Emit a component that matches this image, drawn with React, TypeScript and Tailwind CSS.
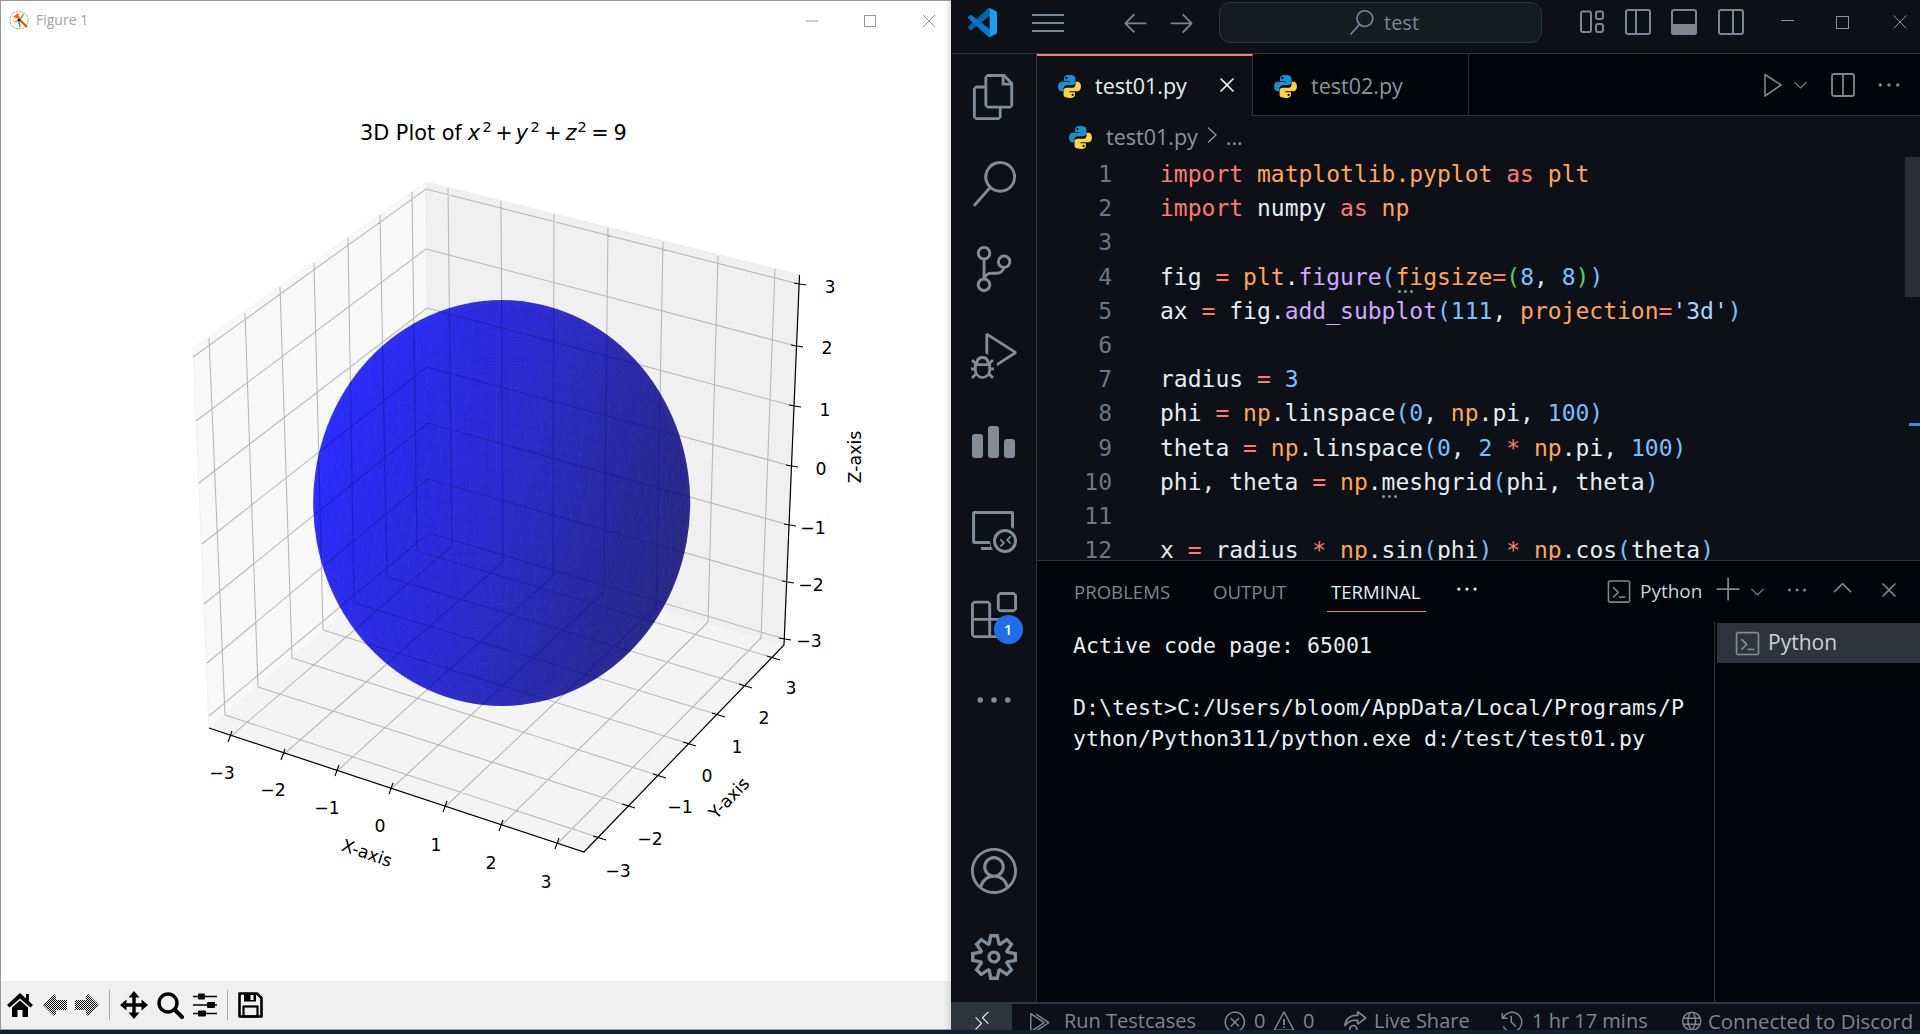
import type { ReactNode } from "react";
import {
  VscAccount,
  VscAdd,
  VscArrowLeft,
  VscArrowRight,
  VscChevronDown,
  VscChevronUp,
  VscClose,
  VscDebugAlt,
  VscEllipsis,
  VscError,
  VscExtensions,
  VscFiles,
  VscGlobe,
  VscHistory,
  VscLiveShare,
  VscMenu,
  VscRemote,
  VscRemoteExplorer,
  VscRunAll,
  VscSearch,
  VscSettingsGear,
  VscSourceControl,
  VscTerminal,
  VscWarning,
} from "react-icons/vsc";

type Pt = [number, number];

// pixel positions read off the matplotlib figure
const zEnds: { l: Pt; b: Pt; r: Pt }[] = [
  { l: [193, 357], b: [426, 189], r: [799, 284] },
  { l: [196, 421], b: [426, 249], r: [796, 346] },
  { l: [199, 483], b: [427, 308], r: [794, 406] },
  { l: [202, 544], b: [427, 367], r: [791, 466] },
  { l: [204, 604], b: [428, 423], r: [789, 525] },
  { l: [207, 663], b: [428, 479], r: [787, 582] },
  { l: [209, 716], b: [429, 533], r: [784, 639] },
];
const leftVerticals: [Pt, Pt][] = [
  [[209, 338], [225, 715]],
  [[245, 313], [258, 687]],
  [[280, 287], [292, 658]],
  [[314, 263], [323, 630]],
  [[348, 238], [354, 603]],
  [[380, 215], [387, 577]],
  [[412, 192], [417, 551]],
];
const backVerticals: [Pt, Pt][] = [
  [[448, 188], [452, 546]],
  [[501, 201], [503, 562]],
  [[554, 214], [553, 576]],
  [[608, 228], [604, 592]],
  [[663, 242], [656, 607]],
  [[718, 256], [708, 622]],
  [[775, 269], [761, 638]],
];
const xTicks: Pt[] = [[230, 737], [283, 755], [337, 771], [391, 789], [445, 807], [501, 826], [557, 844]];
const yTicks: Pt[] = [[600, 838], [629, 806], [660, 776], [690, 744], [719, 715], [746, 686], [774, 658]];
const zTicks: Pt[] = zEnds.map((e) => e.r);

const xLabels: [string, number, number][] = [
  ["−3", 222, 773], ["−2", 273, 790], ["−1", 327, 808], ["0", 380, 826], ["1", 436, 845], ["2", 491, 863], ["3", 546, 882],
];
const yLabels: [string, number, number][] = [
  ["−3", 618, 871], ["−2", 650, 839], ["−1", 680, 807], ["0", 707, 776], ["1", 737, 747], ["2", 764, 718], ["3", 791, 688],
];
const zLabels: [string, number, number][] = [
  ["3", 830, 287], ["2", 827, 348], ["1", 825, 410], ["0", 821, 469], ["−1", 813, 528], ["−2", 811, 585], ["−3", 809, 641],
];

function seg(a: Pt, b: Pt) {
  return `M${a[0]} ${a[1]}L${b[0]} ${b[1]}`;
}

const floorPts = leftVerticals.map((v) => v[1]);
const gridPath = [
  ...zEnds.map((e) => seg(e.l, e.b) + `L${e.r[0]} ${e.r[1]}`),
  ...leftVerticals.map((v) => seg(v[0], v[1])),
  ...backVerticals.map((v) => seg(v[0], v[1])),
  ...floorPts.map((p, i) => seg(p, yTicks[i])),
  ...backVerticals.map((v, i) => seg(xTicks[i], v[1])),
].join("");

function spherePath() {
  const cx = 501.7, cy = 503, rx = 188.5, ry = 203;
  const project = (phi: number, theta: number) => {
    const x = Math.sin(phi) * Math.cos(theta);
    const y = Math.sin(phi) * Math.sin(theta);
    const z = Math.cos(phi);
    const sx = 0.866 * x + 0.5 * y;
    const sy = -0.25 * x + 0.433 * y + 0.866 * z;
    return `${(cx + sx * rx).toFixed(1)} ${(cy - sy * ry).toFixed(1)}`;
  };
  let d = "";
  for (let i = 1; i < 40; i++) {
    const phi = (Math.PI * i) / 40;
    for (let k = 0; k <= 60; k++) d += (k ? "L" : "M") + project(phi, (2 * Math.PI * k) / 60);
  }
  // meridians stop short of the poles so they don't pile up into a bright dot
  for (let i = 0; i < 80; i++) {
    const theta = (2 * Math.PI * i) / 80;
    for (let k = 3; k <= 27; k++) d += (k > 3 ? "L" : "M") + project((Math.PI * k) / 30, theta);
  }
  return d;
}

function Plot() {
  return (
    <svg width={950} height={941} viewBox="1 40 950 941" className="block font-['DejaVu_Sans',sans-serif] text-[17.3px]">
      <defs>
        <linearGradient id="ball" x1="0" y1="0.35" x2="1" y2="0.65">
          <stop offset="0" stopColor="#2a2aff" />
          <stop offset="0.45" stopColor="#2a2ad2" />
          <stop offset="0.8" stopColor="#28289e" />
          <stop offset="1" stopColor="#262680" />
        </linearGradient>
        <clipPath id="ballClip">
          <ellipse cx={501.7} cy={503} rx={188.5} ry={203} />
        </clipPath>
      </defs>

      <text x={360} y={140} fontSize={20.8} fill="#000">3D Plot of</text>
      <g fontSize={20.8} fill="#000" textAnchor="middle">
        <text x={474} y={140} fontStyle="italic">x</text>
        <text x={487} y={132} fontSize={14.5}>2</text>
        <text x={504} y={140}>+</text>
        <text x={522} y={140} fontStyle="italic">y</text>
        <text x={535} y={132} fontSize={14.5}>2</text>
        <text x={553} y={140}>+</text>
        <text x={571} y={140} fontStyle="italic">z</text>
        <text x={582} y={132} fontSize={14.5}>2</text>
        <text x={600} y={140}>=</text>
        <text x={620} y={140}>9</text>
      </g>

      <polygon points="193,348 426,182 430,540 209,728" fill="#f8f8f8" stroke="#f1f1f1" />
      <polygon points="426,182 799.5,275 784,645 430,540" fill="#f0f0f0" stroke="#ececec" />
      <polygon points="209,728 584,852 784,645 430,540" fill="#f4f4f4" stroke="#f0f0f0" />
      <path d={gridPath} fill="none" stroke="#b8b8b8" strokeWidth={1.1} />

      <ellipse cx={501.7} cy={503} rx={188.5} ry={203} fill="url(#ball)" />
      <g clipPath="url(#ballClip)">
        <path d={spherePath()} fill="none" stroke="#ffffff" strokeOpacity={0.035} strokeWidth={0.7} />
        <path d={gridPath} fill="none" stroke="#14148c" strokeOpacity={0.5} strokeWidth={1.1} />
      </g>

      <path d="M209 728L584 852L784 645L799.5 275" fill="none" stroke="#000" strokeWidth={1.2} />
      <g stroke="#000" strokeWidth={1.1}>
        {xTicks.map((p, i) => <line key={i} x1={p[0] + 2} y1={p[1] - 6} x2={p[0] - 2} y2={p[1] + 5} />)}
        {yTicks.map((p, i) => <line key={i} x1={p[0] - 7} y1={p[1] - 2} x2={p[0] + 6} y2={p[1] + 2} />)}
        {zTicks.map((p, i) => <line key={i} x1={p[0] - 5} y1={p[1] - 1} x2={p[0] + 7} y2={p[1] + 1} />)}
      </g>

      <g fill="#000" textAnchor="middle" dominantBaseline="central">
        {[...xLabels, ...yLabels, ...zLabels].map(([t, x, y], i) => (
          <text key={i} x={x} y={y}>{t}</text>
        ))}
        <text x={367} y={853} transform="rotate(19 367 853)">X-axis</text>
        <text x={729} y={798} transform="rotate(-46 729 798)">Y-axis</text>
        <text x={855} y={457} transform="rotate(-90 855 457)">Z-axis</text>
      </g>
    </svg>
  );
}

function FigIcon() {
  return (
    <svg width={22} height={22} viewBox="0 0 22 22">
      <circle cx={11} cy={10} r={9} fill="#fff" stroke="#9a9a9a" strokeWidth={1} strokeDasharray="2 1" />
      <path d="M5 7L10 3L12 9Z" fill="#e8650a" />
      <path d="M12 10L19 17" stroke="#c8560a" strokeWidth={2} />
      <path d="M11 10L16 4" stroke="#8ab000" strokeWidth={1.5} />
      <path d="M11 11L6 12" stroke="#e8a030" strokeWidth={1.5} />
      <path d="M11 12L12 17" stroke="#30a050" strokeWidth={1.5} />
      <circle cx={11} cy={10} r={1.6} fill="#222" />
    </svg>
  );
}

function Dither({ id }: { id: string }) {
  return (
    <defs>
      <pattern id={id} width={2} height={2} patternUnits="userSpaceOnUse">
        <rect width={1} height={1} fill="#000" />
        <rect x={1} y={1} width={1} height={1} fill="#000" />
      </pattern>
    </defs>
  );
}

function Toolbar() {
  return (
    <div className="h-[48px] flex items-center bg-[#f0f0f0] pl-[5px] shrink-0">
      <svg width={28} height={28} viewBox="0 0 28 28">
        <path d="M14 2L27 14L24.5 16.5L14 7.5L3.5 16.5L1 14Z M20 3H23V10L20 8Z" fill="#000" />
        <path d="M6 16.5L14 9.5L22 16.5V26H16.5V19H11.5V26H6Z" fill="#000" />
      </svg>
      <svg width={28} height={28} viewBox="0 0 28 28" className="ml-[7px]">
        <Dither id="d1" />
        <path d="M2 14L13 3L15 5V9H26V19H15V23L13 25Z" fill="url(#d1)" />
      </svg>
      <svg width={28} height={28} viewBox="0 0 28 28" className="ml-[4px]">
        <Dither id="d2" />
        <path d="M26 14L15 3L13 5V9H2V19H13V23L15 25Z" fill="url(#d2)" />
      </svg>
      <div className="ml-[8px] w-px h-[30px] bg-[#a6a6a6]" />
      <svg width={28} height={28} viewBox="0 0 28 28" className="ml-[10px]">
        <path d="M14 5V23M5 14H23" stroke="#000" strokeWidth={3.4} />
        <path d="M14 0L19.5 6.5H8.5Z M14 28L19.5 21.5H8.5Z M0 14L6.5 8.5V19.5Z M28 14L21.5 8.5V19.5Z" fill="#000" />
      </svg>
      <svg width={28} height={28} viewBox="0 0 28 28" className="ml-[8px]">
        <circle cx={12} cy={12} r={9} fill="none" stroke="#000" strokeWidth={3.4} />
        <path d="M18.5 18.5L26 26" stroke="#000" strokeWidth={4} strokeLinecap="round" />
      </svg>
      <svg width={28} height={28} viewBox="0 0 28 28" className="ml-[7px]">
        <path d="M2 5.5H26M2 14H26M2 22.5H26" stroke="#000" strokeWidth={1.6} />
        <rect x={7} y={2.5} width={7} height={6} rx={1} fill="#000" />
        <rect x={16} y={11} width={8} height={6} rx={1} fill="#000" />
        <rect x={7} y={19.5} width={8} height={6} rx={1} fill="#000" />
      </svg>
      <div className="ml-[8px] w-px h-[30px] bg-[#a6a6a6]" />
      <svg width={28} height={28} viewBox="0 0 28 28" className="ml-[8px]">
        <path d="M3.5 2.5H21L25.5 7V25.5H3.5Z" fill="none" stroke="#000" strokeWidth={2.6} strokeLinejoin="round" />
        <path d="M8 2.5H20V10.5H8Z" fill="#000" />
        <rect x={14.5} y={4} width={3} height={5} fill="#f0f0f0" />
        <rect x={7.5} y={15.5} width={14} height={10} fill="none" stroke="#000" strokeWidth={2.2} />
      </svg>
    </div>
  );
}

function FigureWindow() {
  return (
    <div className="relative w-[951px] shrink-0 flex flex-col bg-white border-l border-t border-b border-[#999999]">
      <div className="h-[39px] shrink-0 flex items-center pl-[7px] pr-[10px] font-['Open_Sans',sans-serif] text-[14px] text-[#a3a3a3]">
        <FigIcon />
        <span className="ml-[6px] -mt-[2px]">Figure 1</span>
        <svg width={24} height={24} viewBox="0 0 24 24" className="ml-auto">
          <path d="M6 12H18" stroke="#999" />
        </svg>
        <svg width={24} height={24} viewBox="0 0 24 24" className="ml-[34px]">
          <rect x={6.5} y={6.5} width={11} height={11} fill="none" stroke="#999" />
        </svg>
        <svg width={24} height={24} viewBox="0 0 24 24" className="ml-[35px]">
          <path d="M6 6L18 18M18 6L6 18" stroke="#999" />
        </svg>
      </div>
      <Plot />
      <div className="flex-1" />
      <Toolbar />
      <div className="absolute top-0 bottom-0 right-0 w-[7px] bg-linear-to-r from-transparent to-black/10" />
    </div>
  );
}

function Logo() {
  return (
    <svg width={29} height={29} viewBox="0 0 100 100">
      <path fill="#0065a9" d="M96.46 10.8L75.86.88C73.47-.27 70.62.21 68.75 2.08L1.3 63.58c-1.81 1.65-1.81 4.51 0 6.16l5.51 5.01c1.49 1.35 3.72 1.45 5.32.24L93.36 13.37C96.09 11.3 100 13.25 100 16.67v-.24c0-2.4-1.38-4.59-3.54-5.63z" />
      <path fill="#007acc" d="M96.46 89.2L75.86 99.12c-2.39 1.15-5.24.67-7.11-1.2L1.3 36.42c-1.81-1.65-1.81-4.51 0-6.16l5.51-5.01c1.49-1.35 3.72-1.45 5.32-.24l81.23 61.62c2.73 2.07 6.64.12 6.64-3.3v.24c0 2.4-1.38 4.59-3.54 5.63z" />
      <path fill="#1f9cf0" d="M75.86 99.13c-2.39 1.15-5.24.66-7.11-1.21C71.06 100.22 75 98.59 75 95.33V4.67c0-3.26-3.94-4.89-6.25-2.59C70.62.21 73.47-.27 75.86.87l20.6 9.91C98.62 11.82 100 14.01 100 16.41v67.18c0 2.4-1.38 4.59-3.54 5.63z" />
    </svg>
  );
}

function PyIcon({ size = 25 }: { size?: number }) {
  const snake = "M11.9 1C8 1 6.8 2.4 6.8 4.2V6.6h5.3v.8H4.5C2.6 7.4 1 8.9 1 12c0 3 1.4 4.6 3.3 4.6h1.9V14c0-1.9 1.5-3.3 3.4-3.3h5.3c1.5 0 2.8-1.3 2.8-2.8V4c0-1.6-1.5-3-5.8-3zM9 2.9a1.05 1.05 0 110 2.1 1.05 1.05 0 010-2.1z";
  return (
    <svg width={size} height={size} viewBox="0 0 24 24" className="shrink-0">
      <path d={snake} fill="#1b8fd2" fillRule="evenodd" />
      <path d={snake} fill="#fdd33f" fillRule="evenodd" transform="rotate(180 12 12)" />
    </svg>
  );
}

function LayoutIcon({ kind }: { kind: "custom" | "left" | "panel" | "right" }) {
  const c = "#7d8590";
  if (kind === "custom") {
    return (
      <svg width={26} height={26} viewBox="0 0 26 26" fill="none" stroke={c} strokeWidth={2}>
        <rect x={2} y={2.5} width={10} height={20.5} rx={2} />
        <rect x={17} y={2.5} width={7} height={7.5} rx={2} />
        <rect x={17} y={15} width={7} height={8} rx={2} />
      </svg>
    );
  }
  return (
    <svg width={26} height={26} viewBox="0 0 26 26" fill="none" stroke={c} strokeWidth={2}>
      <rect x={1} y={1} width={24} height={24} rx={2} />
      {kind === "left" && <path d="M11 1V25" />}
      {kind === "right" && <path d="M15 1V25" />}
      {kind === "panel" && <path d="M1 16H25V23a2 2 0 01-2 2H3a2 2 0 01-2-2Z" fill={c} />}
    </svg>
  );
}

function TitleBar() {
  return (
    <div className="h-[54px] shrink-0 flex items-center pb-[9px] border-b border-[#30363d] text-[#7d8590]">
      <div className="w-[63px] flex justify-center"><Logo /></div>
      <div className="w-[68px] flex justify-center"><VscMenu size={32} /></div>
      <div className="ml-[30px] w-[46px] flex justify-center"><VscArrowLeft size={29} /></div>
      <div className="w-[47px] flex justify-center"><VscArrowRight size={29} /></div>
      <div className="ml-[14px] w-[323px] h-[41px] flex items-center pl-[129px] gap-[10px] rounded-[11px] border border-[#30363d] bg-[#161b22] font-['Open_Sans',sans-serif] text-[20px]">
        <VscSearch size={25} />
        <span className="mt-px">test</span>
      </div>
      <div className="ml-[27px] w-[46px] flex justify-center"><LayoutIcon kind="custom" /></div>
      <div className="w-[45px] flex justify-center"><LayoutIcon kind="left" /></div>
      <div className="w-[47px] flex justify-center"><LayoutIcon kind="panel" /></div>
      <div className="w-[48px] flex justify-center"><LayoutIcon kind="right" /></div>
      <div className="w-[64px] flex justify-center -mt-[4px]">
        <div className="w-[13px] h-px bg-[#8b949e]" />
      </div>
      <div className="w-[46px] flex justify-center">
        <div className="w-[13px] h-[13px] border border-[#8b949e]" />
      </div>
      <div className="ml-[15px] w-[40px] flex justify-center">
        <svg width={14} height={14} viewBox="0 0 14 14">
          <path d="M0.5 0.5L13.5 13.5M13.5 0.5L0.5 13.5" stroke="#8b949e" />
        </svg>
      </div>
    </div>
  );
}

function ActivityBar() {
  return (
    <div className="w-[86px] shrink-0 flex flex-col items-center border-r border-[#30363d] text-[#848b95]">
      <div className="h-[86px] flex items-center"><VscFiles size={46} /></div>
      <div className="h-[87px] flex items-center"><VscSearch size={46} /></div>
      <div className="h-[84px] flex items-center"><VscSourceControl size={46} /></div>
      <div className="h-[90px] flex items-center"><VscDebugAlt size={46} /></div>
      <div className="h-[82px] flex items-center">
        <svg width={43} height={32} viewBox="0 0 43 32" fill="#848b95">
          <rect x={0} y={8} width={11} height={24} rx={3} />
          <rect x={16} y={0} width={11} height={32} rx={3} />
          <rect x={32} y={13} width={11} height={19} rx={3} />
        </svg>
      </div>
      <div className="h-[94px] flex items-center"><VscRemoteExplorer size={46} /></div>
      <div className="relative h-[76px] flex items-center">
        <VscExtensions size={46} />
        <div className="absolute left-[23px] top-[38px] w-[29px] h-[29px] rounded-full bg-[#1f6feb] flex items-center justify-center font-['Open_Sans',sans-serif] text-[15px] font-semibold text-white">1</div>
      </div>
      <div className="h-[94px] flex items-center"><VscEllipsis size={44} /></div>
      <div className="flex-1" />
      <div className="h-[82px] flex items-center"><VscAccount size={46} /></div>
      <div className="h-[90px] flex items-center"><VscSettingsGear size={46} /></div>
    </div>
  );
}

function Tabs() {
  return (
    <div className="h-[62px] shrink-0 flex bg-[#010409] font-['Open_Sans',sans-serif] text-[21.5px]">
      <div className="w-[216px] shrink-0 flex items-center pl-[20px] border-t-2 border-r border-[#30363d] border-t-[#f78166] bg-[#0d1117] text-[#e6edf3]">
        <PyIcon />
        <span className="ml-[13px]">test01.py</span>
        <VscClose size={26} className="ml-auto mr-[12px] -mt-[3px]" />
      </div>
      <div className="w-[216px] shrink-0 flex items-center pl-[20px] pt-[3px] border-r border-b border-[#30363d] text-[#8b949e]">
        <PyIcon />
        <span className="ml-[13px]">test02.py</span>
      </div>
      <div className="flex-1 flex items-center border-b border-[#30363d] text-[#7d8590]">
        <div className="ml-[288px] w-[32px] flex justify-center">
          <svg width={20} height={24} viewBox="0 0 20 24" fill="none" stroke="#7d8590" strokeWidth={1.6}>
            <path d="M2 1.5L18 12L2 23Z" strokeLinejoin="round" />
          </svg>
        </div>
        <VscChevronDown size={21} className="ml-[1px]" />
        <div className="ml-[20px] w-[24px] flex justify-center">
          <svg width={24} height={24} viewBox="0 0 24 24" fill="none" stroke="#7d8590" strokeWidth={1.8}>
            <rect x={1} y={1} width={22} height={22} rx={2} />
            <path d="M12 1V23" />
          </svg>
        </div>
        <VscEllipsis size={28} className="ml-[20px]" />
      </div>
    </div>
  );
}

const C = {
  kw: "text-[#ff7b72]",
  var: "text-[#ffa657]",
  fn: "text-[#d2a8ff]",
  num: "text-[#79c0ff]",
  str: "text-[#a5d6ff]",
  grn: "text-[#56d364]",
};

function T({ k, children }: { k: keyof typeof C; children: ReactNode }) {
  return <span className={C[k]}>{children}</span>;
}

function HintDots({ left }: { left: number }) {
  return (
    <span className="absolute top-[30px] flex gap-[3px]" style={{ left }}>
      <span className="w-[3px] h-[3px] rounded-full bg-[#8b949e]" />
      <span className="w-[3px] h-[3px] rounded-full bg-[#8b949e]" />
      <span className="w-[3px] h-[3px] rounded-full bg-[#8b949e]" />
    </span>
  );
}

const codeLines: ReactNode[] = [
  <><T k="kw">import</T> <T k="var">matplotlib.pyplot</T> <T k="kw">as</T> <T k="var">plt</T></>,
  <><T k="kw">import</T> numpy <T k="kw">as</T> <T k="var">np</T></>,
  <></>,
  <>fig <T k="kw">=</T> <T k="var">plt</T>.<T k="fn">figure</T><T k="num">(</T><T k="var">figsize</T><T k="kw">=</T><T k="grn">(</T><T k="num">8</T>, <T k="num">8</T><T k="grn">)</T><T k="num">)</T><HintDots left={238} /></>,
  <>ax <T k="kw">=</T> fig.<T k="fn">add_subplot</T><T k="num">(111</T>, <T k="var">projection</T><T k="kw">=</T><T k="str">'3d'</T><T k="num">)</T></>,
  <></>,
  <>radius <T k="kw">=</T> <T k="num">3</T></>,
  <>phi <T k="kw">=</T> <T k="var">np</T>.linspace<T k="num">(0</T>, <T k="var">np</T>.pi, <T k="num">100)</T></>,
  <>theta <T k="kw">=</T> <T k="var">np</T>.linspace<T k="num">(0</T>, <T k="num">2</T> <T k="kw">*</T> <T k="var">np</T>.pi, <T k="num">100)</T></>,
  <>phi, theta <T k="kw">=</T> <T k="var">np</T>.meshgrid<T k="num">(</T>phi, theta<T k="num">)</T><HintDots left={222} /></>,
  <></>,
  <>x <T k="kw">=</T> radius <T k="kw">*</T> <T k="var">np</T>.sin<T k="num">(</T>phi<T k="num">)</T> <T k="kw">*</T> <T k="var">np</T>.cos<T k="num">(</T>theta<T k="num">)</T></>,
];

function Editor() {
  return (
    <div className="relative h-[444px] shrink-0 flex flex-col overflow-hidden">
      <div className="h-[41px] shrink-0 flex items-center pl-[31px] pt-[1px] font-['Open_Sans',sans-serif] text-[21.5px] text-[#8b949e]">
        <PyIcon />
        <span className="ml-[13px]">test01.py</span>
        <svg width={12} height={18} viewBox="0 0 12 18" fill="none" stroke="#8b949e" strokeWidth={1.3} className="ml-[8px] -mt-[4px]">
          <path d="M2 1.5L10 9L2 16.5" />
        </svg>
        <span className="ml-[8px] leading-none">...</span>
      </div>
      <div className="font-['DejaVu_Sans_Mono',monospace] text-[23px] leading-[34.2px] whitespace-pre text-[#e6edf3]">
        {codeLines.map((line, i) => (
          <div key={i} className="flex h-[34.2px]">
            <span className="w-[75px] shrink-0 text-right text-[#6e7681]">{i + 1}</span>
            <span className="relative ml-[48px]">{line}</span>
          </div>
        ))}
      </div>
      <div className="absolute right-0 top-[41px] w-[15px] h-[140px] bg-[#2b3038]" />
      <div className="absolute right-0 top-[307px] w-[11px] h-[3px] bg-[#3b8eea]" />
    </div>
  );
}

function Panel() {
  return (
    <div className="flex-1 flex flex-col border-t border-[#30363d] bg-[#010409] min-h-0">
      <div className="h-[60px] shrink-0 flex items-center font-['Open_Sans',sans-serif] text-[#7d8590]">
        <div className="ml-[37px] w-[139px] pt-px text-[18.6px]">PROBLEMS</div>
        <div className="w-[118px] pt-px text-[18.6px]">OUTPUT</div>
        <div className="relative w-[122px] pt-px text-[18.6px] text-[#e6edf3]">
          TERMINAL
          <div className="absolute -left-[4px] top-[34px] w-[99px] h-px bg-[#f78166]" />
        </div>
        <VscEllipsis size={26} className="ml-px -mt-[4px] text-[#e6edf3]" />
        <div className="ml-auto flex items-center text-[#7d8590]">
          <div className="w-[26px] flex justify-center"><VscTerminal size={27} /></div>
          <div className="ml-[8px] w-[75px] text-[19px] text-[#c9d1d9]">Python</div>
          <div className="w-[28px] flex justify-center -mt-[3px]"><VscAdd size={30} /></div>
          <div className="w-[29px] flex justify-center"><VscChevronDown size={21} /></div>
          <div className="w-[50px] flex justify-center -mt-[3px]"><VscEllipsis size={24} /></div>
          <div className="w-[40px] flex justify-center -mt-[5px]"><VscChevronUp size={29} /></div>
          <div className="w-[54px] flex justify-center -mt-[3px]"><VscClose size={26} /></div>
          <div className="w-[4px]" />
        </div>
      </div>
      <div className="flex-1 flex min-h-0">
        <div className="flex-1 pl-[36px] pt-[9px] font-['DejaVu_Sans_Mono',monospace] text-[21.6px] leading-[31px] whitespace-pre text-[#e6edf3]">
          <div>Active code page: 65001</div>
          <div>{" "}</div>
          <div>D:\test&gt;C:/Users/bloom/AppData/Local/Programs/P</div>
          <div>ython/Python311/python.exe d:/test/test01.py</div>
        </div>
        <div className="w-[206px] shrink-0 border-l border-[#30363d] pl-[2px] pt-[2px]">
          <div className="h-[40px] flex items-center pl-[17px] bg-[#2f333c] font-['Open_Sans',sans-serif] text-[21px] text-[#c9d1d9]">
            <VscTerminal size={27} className="text-[#848b95]" />
            <span className="ml-[7px]">Python</span>
          </div>
        </div>
      </div>
    </div>
  );
}

function StatusBar() {
  return (
    <div className="h-[28px] shrink-0 flex border-t-2 border-[#30363d] overflow-hidden font-['Open_Sans',sans-serif] text-[20px] leading-[22px] text-[#7d8590]">
      <div className="w-[61px] shrink-0 flex justify-center pt-[6px] bg-[#2f353c]">
        <VscRemote size={22} className="text-[#e6edf3]" />
      </div>
      <div className="flex pt-[6px] whitespace-nowrap">
        <VscRunAll size={24} className="ml-[15px]" />
        <span className="ml-[13px] w-[146px]">Run Testcases</span>
        <VscError size={24} className="ml-[13px]" />
        <span className="ml-[7px] w-[18px]">0</span>
        <VscWarning size={24} />
        <span className="ml-[7px] w-[33px]">0</span>
        <VscLiveShare size={24} className="ml-[7px]" />
        <span className="ml-[7px] w-[113px]">Live Share</span>
        <VscHistory size={24} className="ml-[13px]" />
        <span className="ml-[8px] w-[146px]">1 hr 17 mins</span>
        <VscGlobe size={24} className="ml-[1px]" />
        <span className="ml-[5px] text-[20.4px]">Connected to Discord</span>
      </div>
    </div>
  );
}

function VsCode() {
  return (
    <div className="flex-1 min-w-0 flex flex-col bg-[#0d1117]">
      <TitleBar />
      <div className="flex-1 flex min-h-0">
        <ActivityBar />
        <div className="flex-1 min-w-0 flex flex-col">
          <Tabs />
          <Editor />
          <Panel />
        </div>
      </div>
      <StatusBar />
    </div>
  );
}

export default function App() {
  return (
    <div className="w-[1920px] h-[1034px] flex flex-col overflow-hidden bg-[#0b2230]">
      <div className="h-[1030px] shrink-0 flex">
        <FigureWindow />
        <VsCode />
      </div>
    </div>
  );
}
